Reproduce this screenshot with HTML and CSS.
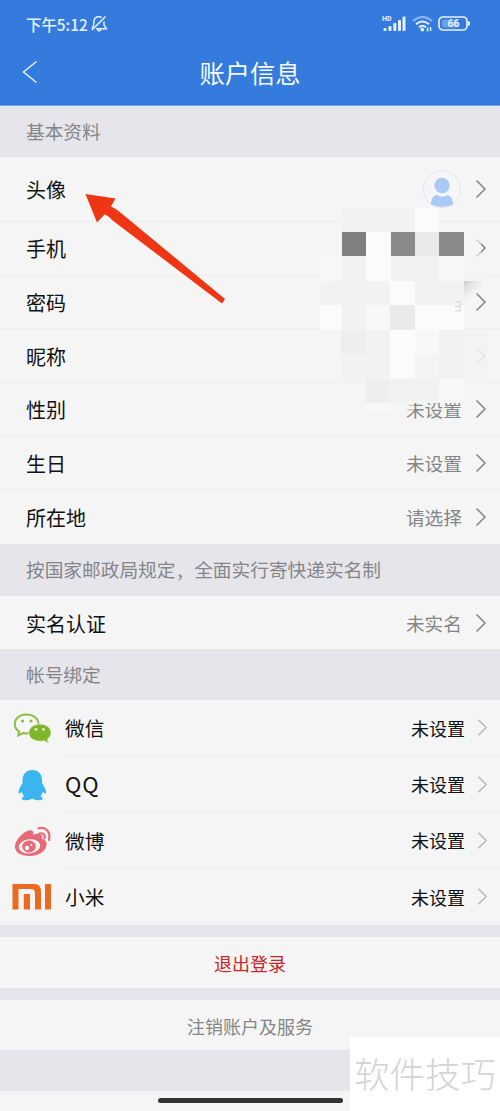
FILE: index.html
```html
<!DOCTYPE html>
<html lang="zh-CN">
<head>
<meta charset="utf-8">
<title>账户信息</title>
<link rel="stylesheet" href="styles.css">
</head>
<body>
<svg class="defs" width="0" height="0"><defs>
  <symbol id="chev" viewBox="0 0 12 20"><path d="M1.5 1.5 10 10 1.5 18.5" fill="none" stroke="currentColor" stroke-width="1.5"/></symbol>
</defs></svg>
<div class="screen">
  <header class="header">
    <div class="status">
      <span class="time">下午5:12</span>
      <svg class="bell" width="17" height="18" viewBox="0 0 17 18" fill="none" stroke="currentColor" stroke-width="1.500"><path d="M2.800 10V7C3 3.500 5 1.800 8 1.800q1.500 0 2.500.6M13 6.500V10l2.300 3.700H5M1 15 14.500 1.500M2.800 10 1 13.500"/><path d="M6 15q2.200 2.500 4.400 0z" fill="currentColor" stroke-width=".8"/></svg>
      <svg class="signal" width="26" height="18" viewBox="0 0 26 18" fill="currentColor"><text x="0" y="5.800" class="hd">HD</text><rect x="1.500" y="13" width="3" height="3" rx="1"/><rect x="6.500" y="11" width="3" height="5" rx="1"/><rect x="11.300" y="8" width="3" height="8" rx="1"/><rect x="16" y="5" width="3" height="11" rx="1"/><rect x="20.500" y="1.500" width="3" height="14.500" rx="1"/></svg>
      <svg class="wifi" width="22" height="18" viewBox="0 0 22 18" fill="none" stroke="currentColor" stroke-width="2"><path d="M1 6q9.500-8 19 0" opacity=".5"/><path d="M4 9.200q6.500-5.500 13 0M7 12.300q3.500-3 7 0"/><circle cx="10.300" cy="14.500" r="1.500" fill="currentColor" stroke-width="1"/><path d="M15.500 12.500v4M18.500 12v4" stroke-width="1.500"/></svg>
      <svg class="battery" width="33" height="18" viewBox="0 0 33 18" fill="none" stroke="currentColor"><rect x="1" y="2" width="28" height="13" rx="4" stroke-width="1.700"/><path d="M31 6.500v4" stroke-width="2"/><rect x="4" y="4.500" width="16" height="8" rx="2" fill="currentColor" stroke="none" opacity=".3"/><text x="15.500" y="12.300" class="pct">66</text></svg>
    </div>
    <div class="nav">
      <svg class="back" width="16" height="24" viewBox="0 0 16 24"><path d="M14.500 1.500 1.500 12l13 10.500" fill="none" stroke="currentColor" stroke-width="1.5"/></svg>
      <h1 class="title">账户信息</h1>
    </div>
  </header>

  <div class="section">基本资料</div>
  <div class="group">
    <div class="row tall"><span>头像</span><svg class="avatar" width="40" height="40" viewBox="0 0 40 40"><circle cx="20" cy="20" r="18.500" fill="#f6f6f8" stroke="#e5e5e8"/><circle cx="20" cy="16.500" r="7.700" fill="#a9caf5"/><path d="M9 35.500c0-6 3-9.500 6-9.500 3 2 7 2 10 0 3 0 6 3.500 6 9.500q-11 4.500-22 0z" fill="#a9caf5"/></svg><svg class="chev"><use href="#chev"/></svg></div>
    <div class="row"><span>手机</span><svg class="chev"><use href="#chev"/></svg></div>
    <div class="row"><span>密码</span><svg class="chev"><use href="#chev"/></svg></div>
    <div class="row"><span>昵称</span><svg class="chev"><use href="#chev"/></svg></div>
    <div class="row"><span>性别</span><span class="value">未设置</span><svg class="chev"><use href="#chev"/></svg></div>
    <div class="row"><span>生日</span><span class="value">未设置</span><svg class="chev"><use href="#chev"/></svg></div>
    <div class="row"><span>所在地</span><span class="value">请选择</span><svg class="chev"><use href="#chev"/></svg></div>
  </div>
  <div class="section notice">按国家邮政局规定<span class="comma">,</span>全面实行寄快递实名制</div>
  <div class="group single">
    <div class="row"><span>实名认证</span><span class="value">未实名</span><svg class="chev"><use href="#chev"/></svg></div>
  </div>
  <div class="section">帐号绑定</div>
  <div class="group binds">
    <div class="bind">
      <svg class="logo" width="40" height="36" viewBox="0 0 40 36"><path d="M14.500 4.500C7.500 4.500 2.800 8.500 2.800 14c0 3 1.500 5.800 4.200 7.500L6.300 25.500l4.700-2.500q3.300 .9 6.500 0C23 22 26.500 18.500 26.500 14c0-5.500-5-9.500-12-9.500z" fill="#f7f7f7" stroke="#8dbd43" stroke-width="2"/><circle cx="10.500" cy="11" r="1.600" fill="#8dbd43"/><circle cx="19" cy="11" r="1.600" fill="#8dbd43"/><path d="M28 14c-6.500 0-11.300 4-11.300 8.800s4.800 8.500 11.300 8.500q2 0 4-.5l4.500 2.500-1-4.200c2.300-1.500 3.700-3.800 3.700-6.300 0-4.800-4.700-8.800-11.200-8.800z" fill="#80b72a" stroke="#f5f5f5" stroke-width=".7"/><circle cx="24" cy="19.500" r="1.400" fill="#e5f2cd"/><circle cx="31.500" cy="19.500" r="1.400" fill="#e5f2cd"/></svg>
      <div class="bind-body"><span>微信</span><span class="state">未设置</span><svg class="chev"><use href="#chev"/></svg></div>
    </div>
    <div class="bind">
      <svg class="logo" width="40" height="36" viewBox="0 0 40 36"><path d="M20.300 3C14 3 10.500 7.500 10.500 13.500v3C8 20 6 23.500 6.800 26.300c.6.900 2-.3 3-1.500.4 2 1.300 3.400 2.500 4.500-2 .8-3 1.800-2.200 2.900 1.500 1.800 8 1.300 10.200-.6 2.200 1.900 8.700 2.400 10.200.6.800-1.100-.2-2.100-2.200-2.900 1.200-1.100 2.100-2.500 2.500-4.500 1 1.200 2.400 2.400 3 1.500.8-2.800-1.200-6.300-3.700-9.800v-3C30.100 7.500 26.600 3 20.300 3z" fill="#3ab5ef"/></svg>
      <div class="bind-body"><span class="latin">QQ</span><span class="state">未设置</span><svg class="chev"><use href="#chev"/></svg></div>
    </div>
    <div class="bind">
      <svg class="logo" width="40" height="36" viewBox="0 0 40 36"><path d="M17 7.500c3.500-.7 5 1.500 4 4.300 5-2 10.500-1.500 9 3.900 3.500 1 5 3 4.500 6.300C33.500 29 26 33 17.500 33 9 33 3 29.500 3 23.500 3 17 11 8.700 17 7.500z" fill="#e66b78"/><ellipse cx="17.500" cy="23.300" rx="10.800" ry="7" transform="rotate(-7 17.500 23.300)" fill="#f9f2f3"/><ellipse cx="17" cy="23.500" rx="6.800" ry="6" fill="#e66b78"/><circle cx="15" cy="25" r="2.200" fill="#fff"/><circle cx="19.300" cy="22" r="1" fill="#fff"/><path d="M27.500 10.500c4-1 6 1.500 5 5M26.500 5.300c7.500-1.800 12.500 3.700 10.500 11.700" fill="none" stroke="#e66b78" stroke-width="2.200" stroke-linecap="round"/></svg>
      <div class="bind-body"><span>微博</span><span class="state">未设置</span><svg class="chev"><use href="#chev"/></svg></div>
    </div>
    <div class="bind">
      <svg class="logo" width="40" height="36" viewBox="0 0 40 36" fill="#ea6b20"><path d="M.5 5H22q7 0 7 7v18.500h-6V14q0-4-4-4H6.500v20.500h-6zM11.800 15H18v15.500h-6.200zM33 5h6v25.500h-6z"/></svg>
      <div class="bind-body"><span>小米</span><span class="state">未设置</span><svg class="chev"><use href="#chev"/></svg></div>
    </div>
  </div>
  <div class="action logout">退出登录</div>
  <div class="action cancel">注销账户及服务</div>
  <div class="bottom"><i class="home"></i></div>

  <svg class="mosaic" width="180" height="220" viewBox="320 207 180 220">
    <defs><linearGradient id="shade" x1="0" y1="0" x2=".7" y2=".8"><stop stop-color="#c8c8c8"/><stop offset="1" stop-color="#f5f5f5" stop-opacity="0"/></linearGradient></defs>
    <path fill="#f2f2f2" d="M341 208h74v24h49v73h-49v98h-49v-24h-25v-74h-20v-24h20z"/>
    <path fill="#f4f4f4" d="M415 305h49v98h-49z"/>
    <path fill="#f4f4f4" opacity=".65" d="M464 232h17v49h-17z"/>
    <path fill="#f2f2f2" opacity=".88" d="M464 330h24v49h-24z"/>
    <path fill="#fbfbfb" d="M415 208h24v24h-24zM366 232h25v49h-25zM390 281h25v24h-25zM320 305h22v25h-22zM415 305h49v25h-49zM390 330h25v49h-25z"/>
    <path fill="#f8f8f8" d="M320 256h22v25h-22zM439 256h25v25h-25zM366 305h24v25h-24zM415 330h24v24h-24zM366 403h24v8h-24zM439 379h25v21h-25z"/>
    <path fill="#eaeaea" d="M415 232h24v24h-24zM390 305h25v25h-25z"/>
    <path fill="#eeeeee" d="M341 330h25v24h-25zM366 379h24v24h-24z"/>
    <path fill="#f1f1f1" d="M439 330h25v49h-25zM390 379h49v22h-49z"/>
    <path fill="#808080" d="M342 232h24v24h-24z"/>
    <path fill="#8a8a8a" d="M391 232h24v24h-24zM439 232h25v24h-25z"/>
    <path fill="#f7f7f7" opacity=".6" d="M404 401h10v10h-10z"/>
    <path class="trace" d="M455 302h5v9h-5M455 306.500h5"/>
    <path fill="url(#shade)" d="M464 281h18v20h-18z"/>
  </svg>
  <svg class="arrow" width="142" height="112" viewBox="0 0 142 112"><path d="M.5 1 30.500 5.500 26 13.500Q31 15.500 36 20L140 106l-3 4.500L27 27Q22 21.500 19.500 21.500L12 29.500z" fill="#ee3514"/></svg>
  <div class="watermark">软件技巧</div>
</div>
</body>
</html>
```
FILE: styles.css
```css
* { box-sizing: border-box; }
body { margin: 0; font-family: "Noto Sans CJK SC", sans-serif; }
.defs { position: absolute; }
.screen { position: relative; width: 500px; height: 1111px; background: #e5e5eb; color: #111; overflow: hidden; display: flex; flex-direction: column; }
.screen svg { flex: none; }
.header { height: 106px; background: #347bdd; color: #e6f1ff; border-bottom: 1px solid #72a6e2; flex: none; }
.status { height: 46px; display: flex; align-items: center; padding: 2px 29px 0 26px; }
.time { font-size: 15.400px; font-weight: 500; line-height: 20px; white-space: nowrap; width: 65px; }
.signal { margin-left: auto; margin-right: 4px; }
.wifi { margin-right: 4px; }
.hd { font: bold 7px Roboto, sans-serif; }
.pct { font: bold 10.5px Roboto, sans-serif; fill: currentColor; stroke: none; text-anchor: middle; }
.nav { height: 52px; display: flex; align-items: center; padding: 0 22px; }
.title { flex: 1; margin: 0 16px 0 0; padding-bottom: 1px; text-align: center; font-size: 25.300px; font-weight: 400; line-height: 30px; color: #f5faff; }
.section { height: 51px; flex: none; padding-left: 26px; font-size: 18.700px; line-height: 49px; color: #858589; white-space: nowrap; }
.notice { height: 52px; display: flex; }
.comma { width: 18.700px; padding-left: 2px; }
.group { background: #f5f5f5; flex: none; }
.row { height: 53.700px; display: flex; align-items: center; padding: 0 13px 0 26px; font-size: 20px; line-height: 30px; border-bottom: 1px solid #eeeeef; }
.tall { height: 65px; }
.row:last-child { border-bottom: 0; }
.single .row { height: 53px; }
.row .chev { color: #858585; margin-left: 13px; }
.chev { width: 12px; height: 20px; margin-left: auto; }
.row > span:first-child { margin-right: auto; padding-top: 2px; }
.value { font-size: 18.700px; color: #858585; }
.bind { height: 56.250px; display: flex; align-items: center; padding-left: 12px; }
.bind-body { flex: 1; height: 100%; margin-left: 13px; padding-right: 12px; display: flex; align-items: center; font-size: 19.700px; border-bottom: 1px solid #ededee; }
.bind:last-child .bind-body { border: 0; padding-bottom: 1px; }
.latin { font-size: 22px; letter-spacing: 1px; padding-bottom: 2px; }
.state { margin-left: auto; font-size: 18px; }
.bind .chev { width: 11px; height: 19px; margin-left: 12px; color: #b7b7b7; }
.action { height: 50.500px; flex: none; margin-top: 12px; background: #f5f5f5; text-align: center; font-size: 18px; line-height: 52px; }
.logout { color: #c72528; }
.cancel { color: #858585; }
.bottom { margin-top: auto; height: 20px; background: #f5f5f5; display: flex; justify-content: center; padding-top: 7px; }
.home { width: 185px; height: 5px; border-radius: 3px; background: #333337; }
.mosaic { position: absolute; left: 320px; top: 207px; }
.trace { fill: none; stroke: #d3d3d3; }
.arrow { position: absolute; left: 85px; top: 193px; }
.watermark { position: absolute; right: 0; bottom: 0; width: 150px; height: 74px; background: #fff; color: #d4d4d4; font-size: 35.500px; font-weight: 300; line-height: 72px; padding-left: 4px; white-space: nowrap; }
```
